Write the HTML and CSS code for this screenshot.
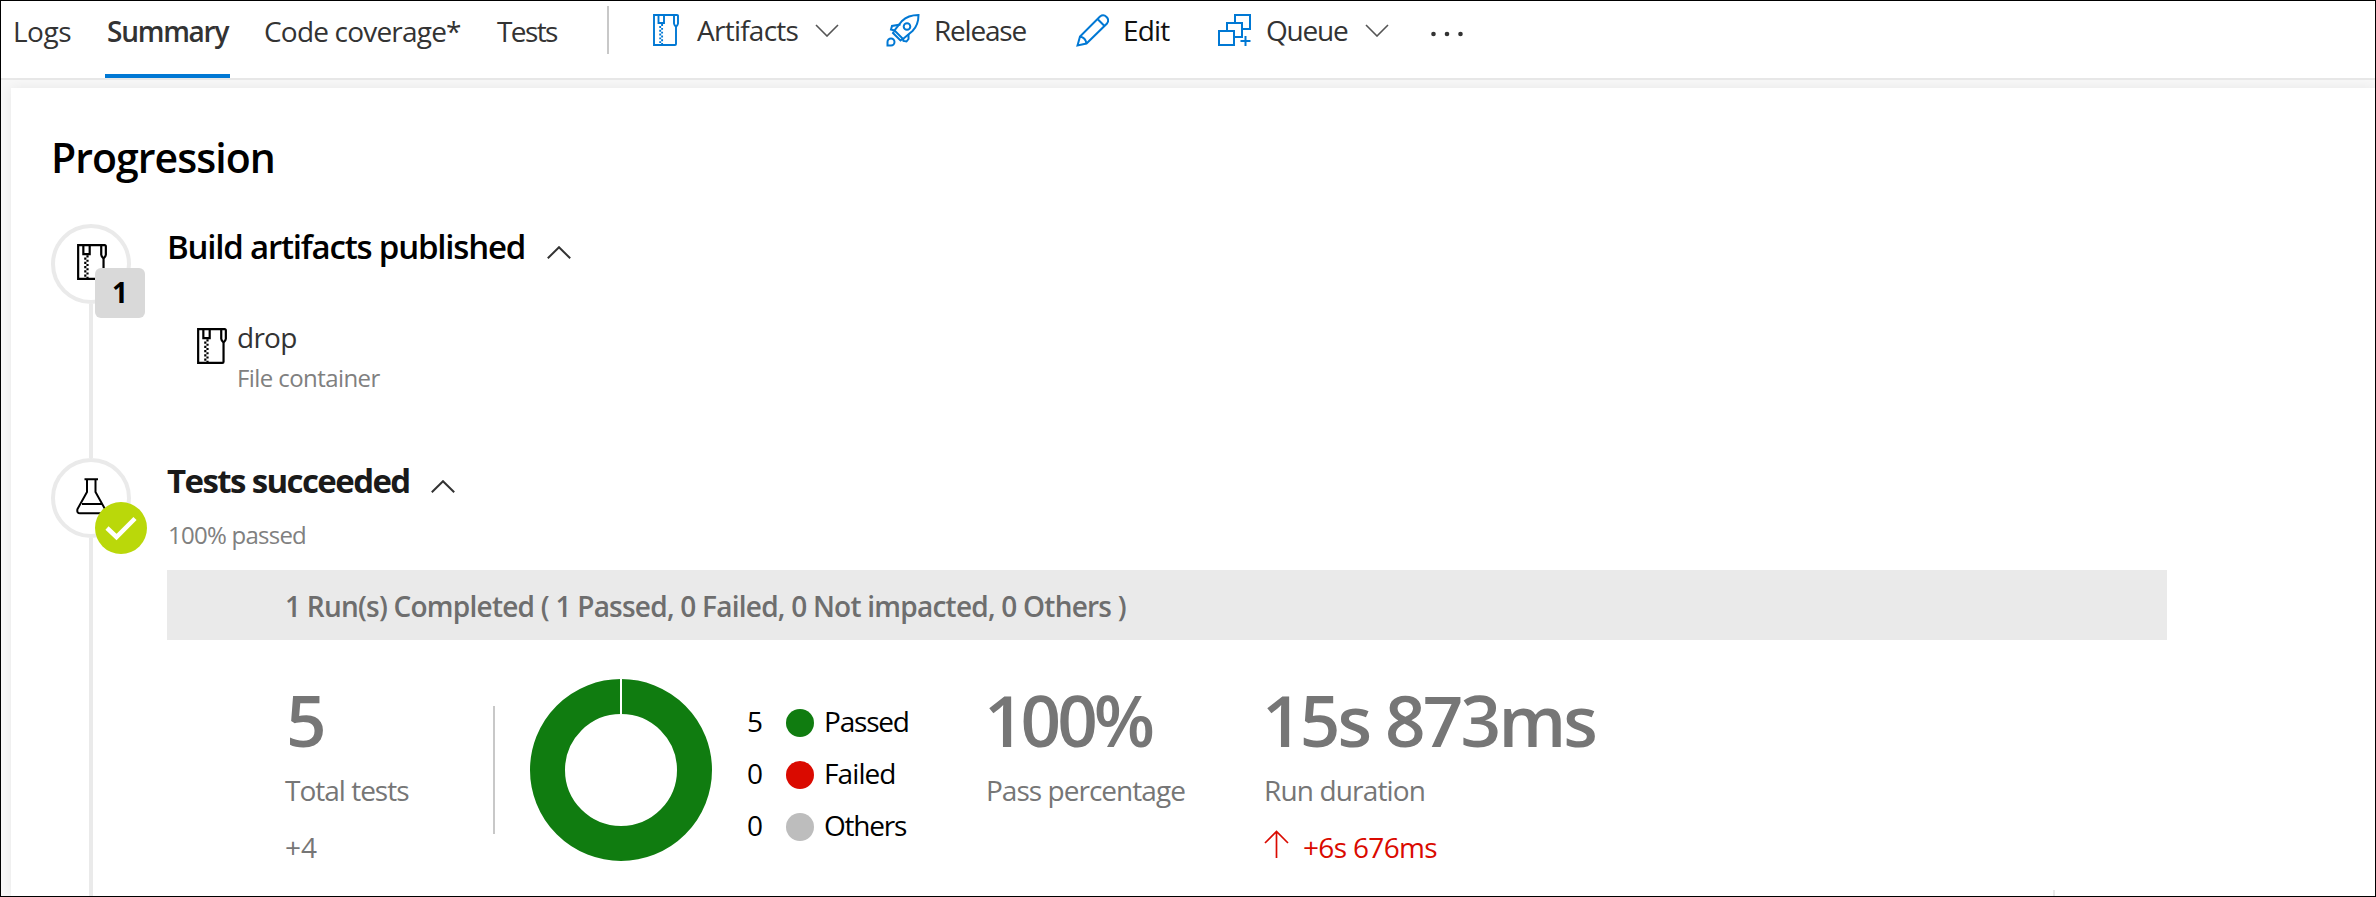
FILE: index.html
```html
<!DOCTYPE html>
<html lang="en">
<head>
<meta charset="utf-8">
<title>Build summary</title>
<link rel="stylesheet" href="styles.css">
</head>
<body>
<svg class="defs" width="0" height="0">
  <symbol id="zip" viewBox="0 0 26 32">
    <path d="M21 1H1V31H22Q23 31 23 30V13M21 1V9.500Q21 10.500 23 13Q25 10.500 25 9.500V2Q25 1 24 1H21" fill="none" stroke="currentColor" stroke-width="1.900"/>
    <path d="M5.500 1V9H11V1" fill="none" stroke="currentColor" stroke-width="1.900"/>
    <path d="M7.200 12V30" fill="none" stroke="currentColor" stroke-width="1.900" stroke-dasharray="1.900 1.900"/>
    <path d="M9.100 10.100V31" fill="none" stroke="currentColor" stroke-width="1.900" stroke-dasharray="1.900 1.900"/>
  </symbol>
  <symbol id="down" viewBox="0 0 24 13"><path d="M1 1L12 12L23 1" fill="none" stroke="currentColor" stroke-width="1.6"/></symbol>
  <symbol id="up" viewBox="0 0 24 13"><path d="M.8 12.3L12 1.2L23.2 12.3" fill="none" stroke="currentColor" stroke-width="2"/></symbol>
</svg>
<div class="page">
  <header class="topbar">
    <nav class="tabs">
      <a class="tab tab-logs">Logs</a>
      <a class="tab tab-summary">Summary</a>
      <a class="tab tab-coverage">Code coverage*</a>
      <a class="tab tab-tests">Tests</a>
    </nav>
    <div class="separator"></div>
    <div class="commands">
      <a class="cmd cmd-artifacts"><svg class="zip-blue" width="26" height="32"><use href="#zip"/></svg><span class="cmd-text">Artifacts</span><svg class="chev" width="24" height="13"><use href="#down"/></svg></a>
      <a class="cmd cmd-release"><svg class="blue" width="34" height="33" viewBox="0 0 34 33" fill="none" stroke="currentColor" stroke-width="2"><path d="M32.500 1C25 1 20 3 16 7L8.500 16.500L17 25L26.500 17C30.500 13 32.500 8 32.500 1Z"/><circle cx="21" cy="12.500" r="3.300"/><path d="M14.500 10.500L6 12L5 15.500L8.500 16.500M22.500 20V25L20.500 27.500L17.500 27L17 24.500M8.500 16.500L7 19L14.500 26.500L17 24.500"/><path d="M1.500 31.500V28A3.500 3.500 0 1 1 5 31.500Z"/></svg><span class="cmd-text">Release</span></a>
      <a class="cmd cmd-edit"><svg class="blue" width="33" height="33" viewBox="0 0 33 33" fill="none" stroke="currentColor" stroke-width="2"><path d="M1.500 31.500L4 22.500L24 2.500A5 5 0 0 1 31 9.500L10.500 29.500ZM4 22.500Q9.500 23.500 10.500 29.500M21.500 5L28.500 12"/></svg><span class="cmd-text">Edit</span></a>
      <a class="cmd cmd-queue"><svg class="blue" width="33" height="33" viewBox="0 0 33 33" fill="none" stroke="currentColor" stroke-width="2"><path d="M1 17H16V31H1ZM9 17V9H24V23H16M17 9V1H32V15H24M27.500 22V32M22.500 27H32.500"/></svg><span class="cmd-text">Queue</span><svg class="chev" width="24" height="13"><use href="#down"/></svg></a>
      <svg class="more" width="32" height="6" viewBox="0 0 32 6" fill="#333"><circle cx="2.500" cy="3" r="2.300"/><circle cx="16" cy="3" r="2.300"/><circle cx="29.500" cy="3" r="2.300"/></svg>
    </div>
  </header>
  <main class="panel">
    <h1 class="heading">Progression</h1>
    <section class="step step-build">
      <div class="rail">
        <div class="node"><svg class="node-zip" width="30" height="36" viewBox="0 0 26 32" preserveAspectRatio="none"><use href="#zip"/></svg><span class="count">1</span></div>
        <div class="line"></div>
      </div>
      <div class="body">
        <div class="title-row"><h2 class="title title-build">Build artifacts published</h2><svg class="chev-up" width="24" height="13"><use href="#up"/></svg></div>
        <div class="artifact">
          <svg width="30" height="36" viewBox="0 0 26 32" preserveAspectRatio="none"><use href="#zip"/></svg>
          <div class="artifact-text"><div class="artifact-name">drop</div><div class="artifact-kind">File container</div></div>
        </div>
      </div>
    </section>
    <section class="step step-tests">
      <div class="rail">
        <div class="node"><svg class="node-flask" width="31" height="37" viewBox="0 0 31 37" fill="none" stroke="#000" stroke-width="2"><path d="M8.500 1.200H22M11 1V14L1.500 31Q.5 35.200 4 35.200H26.500Q30 35.200 29 31L19.500 14V1M6 26H25.500"/></svg>
          <svg class="check" width="52" height="52" viewBox="0 0 52 52"><circle cx="26" cy="26" r="26" fill="#bad80a"/><path d="M12 26L21.500 35L40 16.500" fill="none" stroke="#fff" stroke-width="4.500"/></svg></div>
        <div class="line"></div>
      </div>
      <div class="body">
        <div class="title-row"><h2 class="title title-tests">Tests succeeded</h2><svg class="chev-up" width="24" height="13"><use href="#up"/></svg></div>
        <div class="passed-note">100% passed</div>
        <div class="runs">1 Run(s) Completed ( 1 Passed, 0 Failed, 0 Not impacted, 0 Others )</div>
        <div class="stats">
          <div class="stat stat-total"><div class="big">5</div><div class="label">Total tests</div><div class="delta">+4</div></div>
          <div class="stat-divider"></div>
          <svg class="donut" width="182" height="182" viewBox="0 0 182 182"><circle cx="91" cy="91" r="73.500" fill="none" stroke="#107c10" stroke-width="35"/><path d="M91 0V36" stroke="#fff" stroke-width="2"/></svg>
          <ul class="legend">
            <li><span class="num">5</span><i class="dot dot-passed"></i><span class="name name-passed">Passed</span></li>
            <li><span class="num">0</span><i class="dot dot-failed"></i><span class="name name-failed">Failed</span></li>
            <li><span class="num">0</span><i class="dot dot-others"></i><span class="name name-others">Others</span></li>
          </ul>
          <div class="stat stat-percent"><div class="big">100%</div><div class="label">Pass percentage</div></div>
          <div class="stat stat-duration"><div class="big">15s 873ms</div><div class="label">Run duration</div>
            <div class="delta delta-up"><svg width="26" height="28" viewBox="0 0 26 28" fill="none" stroke="#da0a00" stroke-width="1.700"><path d="M12.500 28V1.500M1 13L12.500 1.500L24 13"/></svg><span>+6s 676ms</span></div></div>
        </div>
      </div>
    </section>
    <div class="tick"></div>
  </main>
</div>
</body>
</html>
```
FILE: styles.css
```css
* { box-sizing: border-box; }
body { margin: 0; font-family: "Open Sans", "Noto Sans", sans-serif; color: #333; }
.defs { display: block; position: absolute; }
.page { width: 2376px; height: 897px; border: 1px solid #000; background: #f8f8f8; overflow: hidden; display: flex; flex-direction: column; white-space: nowrap; }
svg { display: block; flex: none; }
.topbar { height: 79px; flex: none; background: #fff; border-bottom: 2px solid #e8e8e8; display: flex; font-size: 28px; line-height: 40px; }
.tabs { display: flex; width: 606px; padding-left: 11px; }
.tab { height: 77px; padding-top: 10px; flex: none; }
.tab-logs { width: 93px; padding-left: 1px; letter-spacing: -0.5px; }
.tab-summary { width: 125px; padding-left: 2px; border-bottom: 4px solid #0078d4; font-weight: 600; letter-spacing: -1.25px; }
.tab-coverage { width: 232px; padding-left: 34px; letter-spacing: -0.8px; }
.tab-tests { padding-left: 35px; letter-spacing: -1.6px; }
.separator { width: 2px; height: 48px; margin-top: 5px; background: #c8c8c8; flex: none; }
.commands { display: flex; padding-left: 44px; height: 58px; }
.cmd { display: flex; align-items: center; flex: none; }
.cmd-text { flex: 1; }
.cmd-artifacts { width: 233px; }
.cmd-artifacts .cmd-text { padding-left: 18px; letter-spacing: -0.75px; }
.cmd-release { width: 190px; }
.cmd-release .cmd-text { padding-left: 14px; letter-spacing: -1.2px; }
.cmd-edit { width: 142px; }
.cmd-edit .cmd-text { padding-left: 14px; color: #111; letter-spacing: -0.8px; }
.cmd-queue { width: 213px; }
.cmd-queue .cmd-text { padding-left: 15px; letter-spacing: -1.2px; }
.cmd-artifacts .chev { margin-right: 47px; }
.cmd-queue .chev { margin-right: 42px; }
.chev { color: #555; }
.blue, .zip-blue { color: #0078d4; }
.more { margin-top: 30px; }
.panel { margin: 8px 0 0 10px; flex: 1; background: #fff; box-shadow: 0 0 12px rgba(0,0,0,.07); padding-left: 40px; display: flex; flex-direction: column; }
h1, h2 { margin: 0; font-weight: 600; color: #000; }
.heading { font-size: 41px; line-height: 60px; letter-spacing: -0.95px; height: 136px; padding-top: 39px; flex: none; }
.step { display: flex; flex: none; }
.step-build { height: 234px; }
.step-tests { height: 438px; }
.rail { width: 116px; display: flex; flex-direction: column; flex: none; }
.node { width: 80px; height: 80px; border: 4px solid #eaeaea; border-radius: 50%; position: relative; flex: none; }
.node-zip { margin: 16px 0 0 22px; color: #000; }
.node-flask { margin: 16px 0 0 21px; }
.line { width: 4px; background: #eaeaea; margin-left: 38px; flex: 1; }
.count { position: absolute; left: 40px; top: 40px; width: 50px; height: 50px; border-radius: 6px; background: #d9d9d9; color: #000; font-weight: 700; font-size: 28px; line-height: 49px; text-align: center; }
.check { position: absolute; left: 40px; top: 40px; }
.body { flex: none; width: 2000px; }
.title-row { display: flex; height: 46px; align-items: center; }
.title { font-size: 33px; line-height: 46px; flex: none; }
.title-build { width: 380px; letter-spacing: -1.2px; }
.title-tests { width: 264px; color: #1a1a1a; font-weight: 700; letter-spacing: -1.6px; }
.chev-up { margin-top: 10px; color: #333; }
.artifact { display: flex; padding: 58px 0 0 30px; color: #000; }
.artifact-text { padding-left: 10px; margin-top: -11px; }
.artifact-name { font-size: 28px; line-height: 40px; color: #333; letter-spacing: -0.75px; }
.artifact-kind { font-size: 24px; line-height: 40px; padding-top: 1px; color: #808080; letter-spacing: -0.58px; }
.passed-note { font-size: 24px; line-height: 40px; color: #808080; height: 66px; padding: 11px 0 0 1px; letter-spacing: -0.75px; }
.runs { height: 70px; background: #eaeaea; font-size: 28px; line-height: 70px; font-weight: 600; color: #6e6e6e; padding: 1px 0 0 118px; letter-spacing: -0.76px; }
.stats { display: flex; padding-left: 118px; height: 256px; }
.stat { flex: none; color: #767676; font-size: 28px; line-height: 40px; padding-top: 30px; }
.big { font-size: 71px; line-height: 100px; height: 98px; font-weight: 600; }
.label { padding-top: 2px; height: 57px; }
.delta { padding-top: 2px; }
.stat-total { width: 208px; }
.stat-total .big { padding-left: 1px; }
.stat-total .label { letter-spacing: -1px; }
.stat-divider { width: 2px; height: 128px; background: #c8c8c8; margin-top: 66px; flex: none; }
.donut { margin: 39px 0 0 35px; }
.legend { list-style: none; margin: 57px 0 0; padding: 0 0 0 35px; width: 274px; color: #000; font-size: 28px; flex: none; }
.legend li { display: flex; align-items: center; height: 52px; line-height: 40px; }
.num { width: 39px; padding-bottom: 4px; }
.dot { width: 28px; height: 28px; border-radius: 50%; flex: none; }
.dot-passed { background: #107c10; }
.dot-failed { background: #da0a00; }
.dot-others { background: #bdbdbd; }
.name { padding: 0 0 4px 10px; letter-spacing: -1.2px; }
.name-failed { letter-spacing: -0.9px; }
.stat-percent { width: 278px; }
.stat-percent .big { letter-spacing: -4px; margin-left: -2px; }
.stat-percent .label { letter-spacing: -0.97px; }
.stat-duration .big { letter-spacing: -2.8px; margin-left: -2px; }
.stat-duration .label { letter-spacing: -0.85px; }
.delta-up { display: flex; color: #da0a00; letter-spacing: -0.67px; }
.delta-up svg { margin-top: 3px; }
.delta-up span { padding-left: 13px; }
.tick { width: 2px; height: 6px; background: #eaeaea; margin-left: 2002px; flex: none; margin-top: -6px; }
```
